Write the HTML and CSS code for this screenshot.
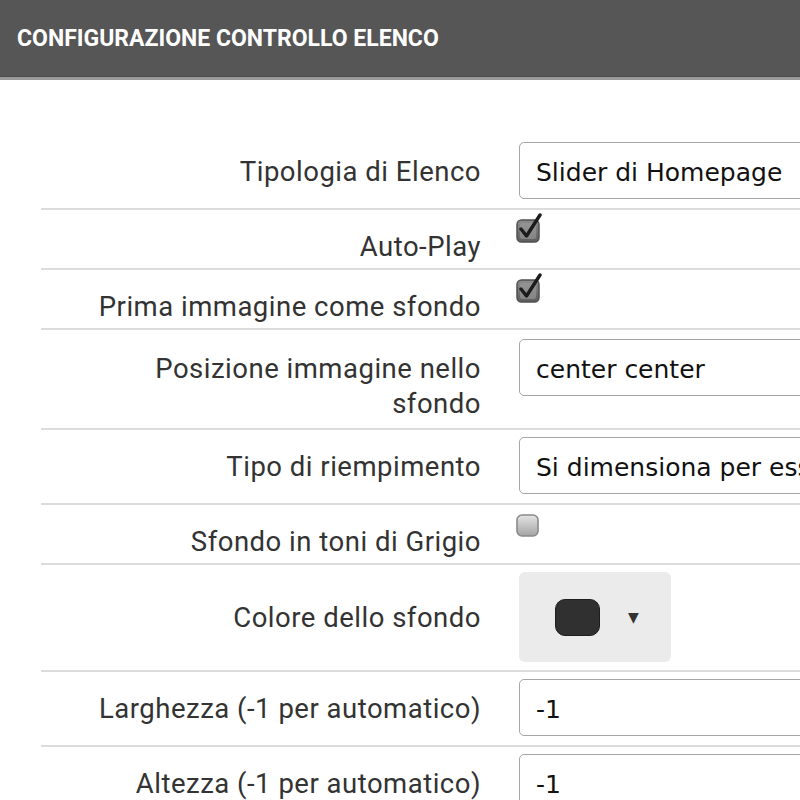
FILE: index.html
```html
<!DOCTYPE html>
<html lang="it">
<head>
<meta charset="utf-8">
<title>Configurazione controllo elenco</title>
<link rel="stylesheet" href="styles.css">
</head>
<body>
<header class="topbar">
  <h1 class="topbar-title">CONFIGURAZIONE CONTROLLO ELENCO</h1>
</header>
<main class="form">
  <div class="row row-first">
    <label class="label">Tipologia di Elenco</label>
    <div class="field"><div class="input">Slider di Homepage</div></div>
  </div>
  <div class="row row-check">
    <label class="label">Auto-Play</label>
    <div class="field"><span class="check checked">
      <svg width="32" height="32" viewBox="0 0 32 32"><defs><linearGradient id="g1" x1="0" y1="0" x2="0" y2="1"><stop offset="0" stop-color="#8e8e8e"/><stop offset="1" stop-color="#5c5c5c"/></linearGradient></defs><rect x="3" y="8" width="22" height="22" rx="4.5" fill="url(#g1)" stroke="#505050" stroke-width="1.5"/><rect x="6" y="11" width="16" height="16" rx="2.5" fill="#a0a0a0" opacity="0.55"/><path d="M7 17 L12.5 24 L26 3" fill="none" stroke="#1c1c1c" stroke-width="3.4" stroke-linecap="round" stroke-linejoin="round"/></svg>
    </span></div>
  </div>
  <div class="row row-check">
    <label class="label">Prima immagine come sfondo</label>
    <div class="field"><span class="check checked">
      <svg width="32" height="32" viewBox="0 0 32 32"><defs><linearGradient id="g2" x1="0" y1="0" x2="0" y2="1"><stop offset="0" stop-color="#8e8e8e"/><stop offset="1" stop-color="#5c5c5c"/></linearGradient></defs><rect x="3" y="8" width="22" height="22" rx="4.5" fill="url(#g2)" stroke="#505050" stroke-width="1.5"/><rect x="6" y="11" width="16" height="16" rx="2.5" fill="#a0a0a0" opacity="0.55"/><path d="M7 17 L12.5 24 L26 3" fill="none" stroke="#1c1c1c" stroke-width="3.4" stroke-linecap="round" stroke-linejoin="round"/></svg>
    </span></div>
  </div>
  <div class="row row-tall">
    <label class="label">Posizione immagine nello sfondo</label>
    <div class="field"><div class="input">center center</div></div>
  </div>
  <div class="row">
    <label class="label">Tipo di riempimento</label>
    <div class="field"><div class="input">Si dimensiona per essere contenuta</div></div>
  </div>
  <div class="row row-check">
    <label class="label">Sfondo in toni di Grigio</label>
    <div class="field"><span class="check">
      <svg width="32" height="32" viewBox="0 0 32 32"><defs><linearGradient id="g3" x1="0" y1="0" x2="0" y2="1"><stop offset="0" stop-color="#e4e4e4"/><stop offset="1" stop-color="#a4a4a4"/></linearGradient></defs><rect x="3" y="8" width="21" height="21" rx="5" fill="url(#g3)" stroke="#8a8a8a" stroke-width="1.6"/></svg>
    </span></div>
  </div>
  <div class="row row-color">
    <label class="label">Colore dello sfondo</label>
    <div class="field">
      <div class="picker"><span class="swatch"></span><span class="caret">&#9660;</span></div>
    </div>
  </div>
  <div class="row">
    <label class="label">Larghezza (-1 per automatico)</label>
    <div class="field"><div class="input">-1</div></div>
  </div>
  <div class="row">
    <label class="label">Altezza (-1 per automatico)</label>
    <div class="field"><div class="input">-1</div></div>
  </div>
</main>
</body>
</html>
```
FILE: styles.css
```css
html, body {
  margin: 0;
  padding: 0;
  background: #ffffff;
  overflow: hidden;
}
body {
  width: 800px;
  height: 800px;
}
.topbar {
  height: 77px;
  background: #565656;
  border-bottom: 3px solid #9a9a9a;
  box-shadow: inset 0 -1px 0 #4a4a4a;
  display: flex;
  align-items: center;
  padding-left: 17px;
}
.topbar-title {
  margin: 0;
  font-family: Roboto, "Liberation Sans", sans-serif;
  font-weight: 700;
  font-size: 23px;
  color: #ffffff;
  white-space: nowrap;
}
.form {
  margin-left: 41px;
  padding-top: 55px;
}
.row {
  display: grid;
  grid-template-columns: 440px 1fr;
  column-gap: 38px;
  align-items: start;
  border-top: 2px solid #dcdcdc;
  padding: 7px 0 8px;
}
.row-first {
  border-top: none;
}
.label {
  font-family: Roboto, "Liberation Sans", sans-serif;
  font-size: 27.5px;
  letter-spacing: 0.5px;
  line-height: 35px;
  color: #333333;
  text-align: right;
  padding-top: 12px;
  padding-left: 40px;
}
.field {
  min-width: 0;
}
.input {
  box-sizing: border-box;
  height: 57px;
  width: 320px;
  border: 1.5px solid #a6a6a6;
  border-radius: 5px;
  padding: 3px 16px 0;
  display: flex;
  align-items: center;
  font-family: "DejaVu Sans", sans-serif;
  font-size: 25px;
  color: #111111;
  white-space: nowrap;
  overflow: hidden;
  margin-bottom: 1px;
}
.row-check {
  padding: 7px 0 4px;
}
.row-check .label {
  padding-top: 12px;
}
.check {
  display: block;
  width: 32px;
  height: 32px;
  margin-top: -5px;
  margin-left: -5px;
  filter: blur(0.7px);
}
.row-tall {
  padding: 9px 0 7px;
}
.row-color {
  padding: 7px 0 8px;
  align-items: center;
}
.row-color .label {
  padding-top: 0;
}
.picker {
  width: 152px;
  height: 90px;
  background: #ebebeb;
  border-radius: 6px;
  display: flex;
  align-items: center;
  padding-left: 36px;
  box-sizing: border-box;
}
.swatch {
  width: 45px;
  height: 37px;
  background: #303030;
  border: 1px solid #1e1e1e;
  border-radius: 10px;
  box-sizing: border-box;
}
.caret {
  margin-left: 28px;
  font-family: "DejaVu Sans", sans-serif;
  font-size: 14px;
  color: #333;
}
```
